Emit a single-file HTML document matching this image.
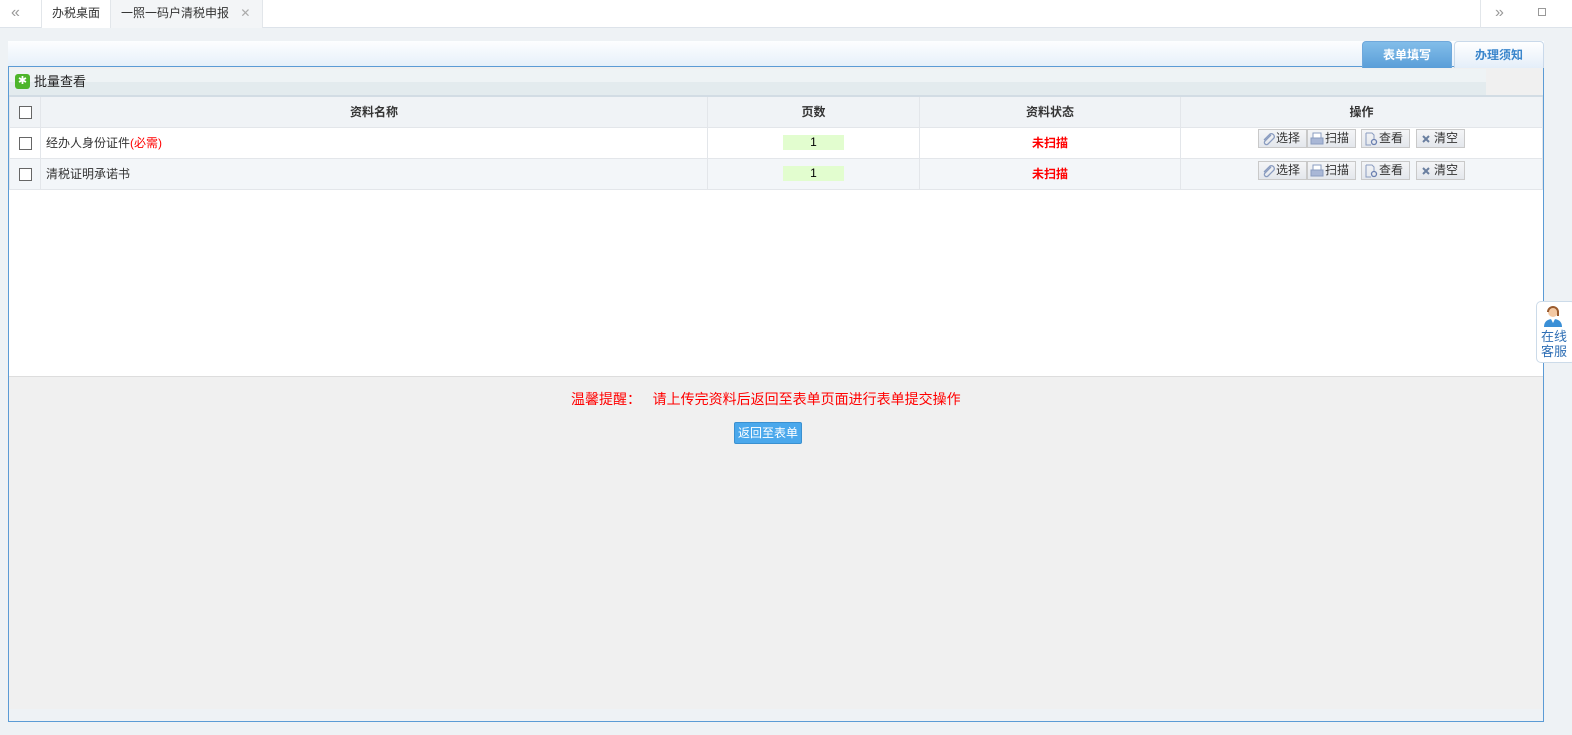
<!DOCTYPE html>
<html><head><meta charset="utf-8"><style>
*{margin:0;padding:0;box-sizing:border-box}
body{width:1572px;height:735px;background:#eef2f5;font-family:"Liberation Sans","Noto Sans CJK SC",sans-serif;font-size:12px;color:#333;position:relative;overflow:hidden}
.abs{position:absolute}
.top{left:0;top:0;width:1572px;height:28px;background:#fff;border-bottom:1px solid #dde3ea}
.tab{top:0;height:28px;line-height:27px;font-size:12px;color:#333;border-left:1px solid #e2e6ea;padding-left:10px}
.hdr{left:8px;top:41px;width:1536px;height:27px;background:linear-gradient(#fdfeff,#e6f0fa);border-bottom:2px solid #5b9bd5}
.t1{left:1362px;top:41px;width:90px;height:27px;background:linear-gradient(#82bde9,#5a9ed8);border:1px solid #6fa8db;border-bottom:none;border-radius:4px 4px 0 0;color:#fff;font-weight:bold;text-align:center;line-height:27px}
.t2{left:1454px;top:41px;width:90px;height:27px;background:linear-gradient(#fff,#e4eef9);border:1px solid #c9d9ea;border-bottom:none;border-radius:4px 4px 0 0;color:#3a86cc;font-weight:bold;text-align:center;line-height:27px}
.panel{left:8px;top:67px;width:1536px;height:655px;border:1px solid #5b9bd5;border-top:none;background:#f0f0f0}
.bar{left:9px;top:69px;width:1477px;height:26px;background:linear-gradient(#eef3f5 50%,#e3ebee 50%)}
.white{left:9px;top:95px;width:1534px;height:282px;background:#fff;border-bottom:1px solid #ddd}
table{position:absolute;left:9px;top:95px;width:1534px;border-collapse:collapse}
td,th{border:1px solid #e3e6ea;height:31px;font-size:12px;padding:0}
th{background:#f0f3f6;font-weight:bold;color:#333;border-top:2px solid #d2dce4}
tr.r2 td{background:#f3f6f9}
.cb{display:inline-block;width:13px;height:13px;border:1px solid #666;background:#fff;vertical-align:middle}
.pg{display:inline-block;width:61px;height:15px;background:#e2fdcf;line-height:15px;color:#000}
.st{color:#f00;font-weight:bold}
.btn{position:absolute;width:49px;height:19px;border:1px solid #c9c9c9;background:linear-gradient(#f4f5f7,#e4e7ec);line-height:17px;color:#333;font-size:12px;padding-left:17px}
.btn svg{position:absolute;left:2px;top:2px}
</style></head><body>
<div class="abs top"></div>
<div class="abs" style="left:11px;top:4px;color:#999;font-size:16px">«</div>
<div class="abs tab" style="left:41px;width:70px;background:#fff">办税桌面</div>
<div class="abs tab" style="left:110px;width:153px;background:#f3f5f7;border-right:1px solid #e2e6ea">一照一码户清税申报 <span style="color:#aaa;margin-left:8px">✕</span></div>
<div class="abs" style="left:1480px;top:0;height:28px;border-left:1px solid #e2e6ea"></div>
<div class="abs" style="left:1495px;top:4px;color:#999;font-size:16px">»</div>
<div class="abs" style="left:1538px;top:8px;width:8px;height:8px;border:1px solid #999"></div>

<div class="abs hdr"></div>
<div class="abs panel"></div>
<div class="abs t1">表单填写</div>
<div class="abs t2">办理须知</div>
<div class="abs bar"></div>
<div class="abs" style="left:15px;top:74px;width:15px;height:15px;background:#4db52b;border-radius:3px;color:#fff;font-size:11px;line-height:15px;text-align:center">✱</div>
<div class="abs" style="left:34px;top:73px;font-size:13px;color:#222;line-height:18px">批量查看</div>
<div class="abs white"></div>
<table>
<tr><th style="width:31px"><span class="cb"></span></th><th style="width:667px">资料名称</th><th style="width:212px">页数</th><th style="width:261px">资料状态</th><th>操作</th></tr>
<tr><td style="text-align:center"><span class="cb"></span></td><td style="padding-left:5px">经办人身份证件<span style="color:#f00">(必需)</span></td><td style="text-align:center"><span class="pg">1</span></td><td style="text-align:center" class="st">未扫描</td><td></td></tr>
<tr class="r2"><td style="text-align:center"><span class="cb"></span></td><td style="padding-left:5px">清税证明承诺书</td><td style="text-align:center"><span class="pg">1</span></td><td style="text-align:center" class="st">未扫描</td><td></td></tr>
</table>
<!-- buttons row 1 -->
<div class="btn" style="left:1258px;top:129px"><svg width="14" height="14"><path d="M10 3L4 9a2 2 0 0 0 3 3l6-6a3 3 0 0 0-4-4L3 8" fill="none" stroke="#8a9cc0" stroke-width="1.3"/></svg>选择</div>
<div class="btn" style="left:1307px;top:129px"><svg width="14" height="14"><rect x="3" y="1" width="8" height="5" fill="#fff" stroke="#8a9cc0"/><rect x="1" y="6" width="12" height="6" fill="#a9b7d6" stroke="#8a9cc0"/></svg>扫描</div>
<div class="btn" style="left:1361px;top:129px"><svg width="14" height="14"><path d="M2 1h6l2 2v4M2 1v12h5" fill="none" stroke="#8a9cc0"/><circle cx="10" cy="10" r="2.5" fill="none" stroke="#6a7fb0" stroke-width="1.3"/></svg>查看</div>
<div class="btn" style="left:1416px;top:129px"><svg width="14" height="14"><path d="M4 4l6 6M10 4l-6 6" stroke="#6a7fa0" stroke-width="2"/></svg>清空</div>
<!-- buttons row 2 -->
<div class="btn" style="left:1258px;top:161px"><svg width="14" height="14"><path d="M10 3L4 9a2 2 0 0 0 3 3l6-6a3 3 0 0 0-4-4L3 8" fill="none" stroke="#8a9cc0" stroke-width="1.3"/></svg>选择</div>
<div class="btn" style="left:1307px;top:161px"><svg width="14" height="14"><rect x="3" y="1" width="8" height="5" fill="#fff" stroke="#8a9cc0"/><rect x="1" y="6" width="12" height="6" fill="#a9b7d6" stroke="#8a9cc0"/></svg>扫描</div>
<div class="btn" style="left:1361px;top:161px"><svg width="14" height="14"><path d="M2 1h6l2 2v4M2 1v12h5" fill="none" stroke="#8a9cc0"/><circle cx="10" cy="10" r="2.5" fill="none" stroke="#6a7fb0" stroke-width="1.3"/></svg>查看</div>
<div class="btn" style="left:1416px;top:161px"><svg width="14" height="14"><path d="M4 4l6 6M10 4l-6 6" stroke="#6a7fa0" stroke-width="2"/></svg>清空</div>

<div class="abs" style="left:9px;top:709px;width:1534px;height:12px;background:#eef2f5"></div>
<div class="abs" style="left:571px;top:389px;color:#f00;font-size:14px">温馨提醒：&nbsp;&nbsp;&nbsp;请上传完资料后返回至表单页面进行表单提交操作</div>
<div class="abs" style="left:734px;top:422px;width:68px;height:22px;background:#4aa8ec;border:1px solid #3a90d0;border-radius:2px;color:#fff;font-size:12px;line-height:20px;text-align:center">返回至表单</div>
<div class="abs" style="left:1536px;top:301px;width:40px;height:62px;background:#fff;border:1px solid #ccdbe9;border-radius:5px"></div>
<svg class="abs" style="left:1543px;top:305px" width="20" height="22"><circle cx="10" cy="7" r="5" fill="#f3c9a4"/><path d="M4 7a6 6 0 0 1 12 0v4h-2V7a4 4 0 0 0-8 0z" fill="#9a5b2e"/><path d="M1 22c0-6 4-8 9-8s9 2 9 8z" fill="#3a8fd6"/><path d="M8 14l2 4 2-4z" fill="#fff"/></svg>
<div class="abs" style="left:1541px;top:329px;color:#2f6fb5;font-size:13px;line-height:15px">在线<br>客服</div>
</body></html>
